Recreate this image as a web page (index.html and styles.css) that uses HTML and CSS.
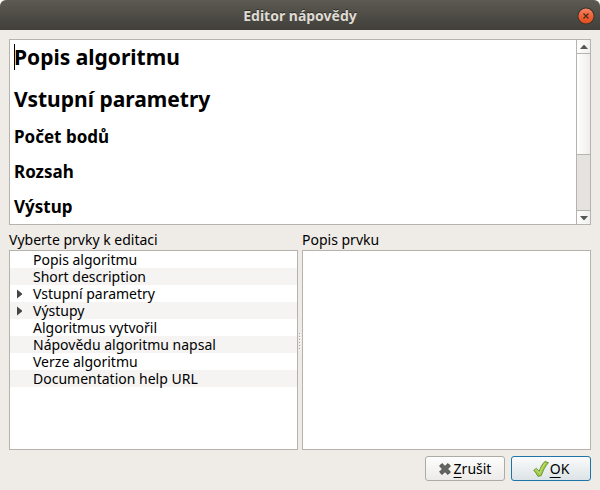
FILE: index.html
```html
<!DOCTYPE html>
<html lang="cs">
<head>
<meta charset="utf-8">
<meta name="viewport" content="width=device-width, initial-scale=1">
<title>Editor nápovědy</title>
<link rel="stylesheet" href="styles.css">
</head>
<body>
<div class="window">
  <header class="titlebar">
    <h1 class="title">Editor nápovědy</h1>
    <button class="close" type="button" aria-label="Zavřít">
      <svg width="18" height="18" viewBox="0 0 18 18" aria-hidden="true">
        <circle cx="9" cy="9" r="8.5" fill="#35322d"/>
        <circle cx="9" cy="9" r="7.6" fill="url(#closeFill)"/>
        <path d="M6.500 6.500l5 5M11.500 6.500l-5 5" stroke="#4b2a1a" stroke-width="1.200" fill="none"/>
        <defs><linearGradient id="closeFill" x1="0" y1="0" x2="0" y2="1"><stop offset="0" stop-color="#f58563"/><stop offset="0.5" stop-color="#ee6238"/><stop offset="1" stop-color="#e34e1c"/></linearGradient></defs>
      </svg>
    </button>
  </header>
  <main class="content">
    <section class="preview frame">
      <div class="document">
        <h2 class="heading"><span class="caret"></span>Popis algoritmu</h2>
        <h2 class="heading">Vstupní parametry</h2>
        <h3 class="subheading">Počet bodů</h3>
        <h3 class="subheading">Rozsah</h3>
        <h3 class="subheading">Výstup</h3>
      </div>
      <div class="scrollbar">
        <button class="step" type="button" aria-label="Nahoru"><svg width="8" height="4" viewBox="0 0 8 4" aria-hidden="true"><path d="M0 4L3.5 0h1L8 4z" fill="#555753"/></svg></button>
        <div class="track"><div class="thumb"></div></div>
        <button class="step" type="button" aria-label="Dolů"><svg width="8" height="4" viewBox="0 0 8 4" aria-hidden="true"><path d="M0 0h8L4.5 4h-1z" fill="#555753"/></svg></button>
      </div>
    </section>
    <div class="panes">
      <section class="pane">
        <h2 class="label" id="tree-label">Vyberte prvky k editaci</h2>
        <div class="frame tree">
          <ul class="items" aria-labelledby="tree-label">
            <li class="item">Popis algoritmu</li>
            <li class="item">Short description</li>
            <li class="item"><button class="expander" type="button" aria-label="Rozbalit Vstupní parametry"><svg width="5" height="10" viewBox="0 0 5 10" aria-hidden="true"><path d="M0 0.5L5 4.5v1L0 9.5z" fill="#454545"/></svg></button>Vstupní parametry</li>
            <li class="item"><button class="expander" type="button" aria-label="Rozbalit Výstupy"><svg width="5" height="10" viewBox="0 0 5 10" aria-hidden="true"><path d="M0 0.5L5 4.5v1L0 9.5z" fill="#454545"/></svg></button>Výstupy</li>
            <li class="item">Algoritmus vytvořil</li>
            <li class="item">Nápovědu algoritmu napsal</li>
            <li class="item">Verze algoritmu</li>
            <li class="item">Documentation help URL</li>
          </ul>
        </div>
      </section>
      <div class="splitter">
        <svg width="2" height="17" viewBox="0 0 2 17" aria-hidden="true"><path d="M0 0h1v1H0zM0 3h1v1H0zM0 6h1v1H0zM0 9h1v1H0zM0 12h1v1H0zM0 15h1v1H0z" fill="#aaa6a1"/><path d="M1 1h1v1H1zM1 4h1v1H1zM1 7h1v1H1zM1 10h1v1H1zM1 13h1v1H1zM1 16h1v1H1z" fill="#fff"/></svg>
      </div>
      <section class="pane">
        <label class="label" for="description">Popis prvku</label>
        <textarea class="description frame" id="description"></textarea>
      </section>
    </div>
    <footer class="actions">
      <button class="button" type="button">
        <svg width="12" height="12" viewBox="0 0 12 12" aria-hidden="true"><path d="M3 0.6L6 3.4 9 0.6 11.4 3 8.5 6 11.4 9 9 11.4 6 8.6 3 11.4 0.6 9 3.5 6 0.6 3z" fill="#646662" stroke="#484a46" stroke-width="1" stroke-linejoin="round"/></svg>
        <span><u class="key">Z</u>rušit</span>
      </button>
      <button class="button primary" type="button">
        <svg width="16" height="16" viewBox="0 0 16 16" aria-hidden="true"><path d="M0.8 9.2L3.4 7.4 6.2 10.4C7.2 7 9.4 2.800 11.800 0.600L15.400 1.600C12.400 5.200 9.800 9.800 8.200 14.600L5 15.400C3.8 13 2.400 11 0.800 9.200z" fill="#a2cb45" stroke="#6b9631" stroke-width="1" stroke-linejoin="round"/><path d="M2.3 9.3l1-.6 3.300 3.600C8 8.400 10 4.500 12.400 1.900" fill="none" stroke="#c8e283" stroke-width="1"/></svg>
        <span><u class="key">O</u>K</span>
      </button>
    </footer>
  </main>
</div>
</body>
</html>
```
FILE: styles.css
```css
* {
  box-sizing: border-box;
}

body {
  margin: 0;
  background: #fff;
  color: #000;
  font: 14px/17px "Noto Sans", "Open Sans", sans-serif;
}

h1, h2, h3, ul {
  margin: 0;
  padding: 0;
}

button {
  padding: 0;
  border: 0;
  background: none;
  color: inherit;
  font: inherit;
}

svg {
  display: block;
  flex: none;
}

.window {
  display: flex;
  flex-direction: column;
  height: 100vh;
  min-height: 400px;
  overflow: hidden;
  border-radius: 6px 6px 0 0;
  background: #efebe7;
}

.titlebar {
  display: grid;
  grid-template-columns: 18px 1fr 18px;
  align-items: center;
  height: 30px;
  padding: 0 5px;
  border-top: 1px solid #5d5b53;
  background: linear-gradient(#5b5951, #403f3a);
}

.title {
  grid-column: 2;
  color: #dfdbd2;
  font-size: 14px;
  text-align: center;
  text-shadow: 0 -1px #2c2b28;
}

.content {
  display: flex;
  flex: 1;
  flex-direction: column;
  min-height: 0;
  padding: 9px;
}

.frame {
  border: 1px solid #b6b3af;
  background: #fff;
}

.preview {
  display: flex;
  flex: 184 1 0;
  min-height: 0;
}

.document {
  flex: 1;
  padding: 4px;
  overflow: hidden;
}

.heading {
  position: relative;
  margin-bottom: 16px;
  font-size: 21px;
  line-height: 26px;
}

.subheading {
  margin-bottom: 18px;
  font-size: 17px;
  line-height: 17px;
}

.caret {
  position: absolute;
  inset: 0 auto 0 0;
  width: 1px;
  background: #000;
}

.scrollbar {
  display: flex;
  flex-direction: column;
  width: 14px;
  border-left: 1px solid #b6b3af;
}

.step {
  display: grid;
  place-items: center;
  height: 13px;
  background: linear-gradient(90deg, #fff, #f0efed);
}

.track {
  flex: 1;
  border: solid #b6b3af;
  border-width: 1px 0;
  background: #e4e3e0;
}

.thumb {
  height: 65%;
  border-bottom: 1px solid #b6b3af;
  background: linear-gradient(90deg, #fff, #eeedeb);
}

.panes {
  display: flex;
  flex: 225 1 0;
  min-height: 0;
}

.pane {
  display: flex;
  flex: 1;
  flex-direction: column;
  min-width: 0;
}

.label {
  padding: 6px 0 2px;
  font-size: 14px;
  font-weight: 400;
}

.tree {
  flex: 1;
  overflow: hidden;
}

.items {
  background: repeating-linear-gradient(#fff 0 17px, #f5f4f3 17px 34px);
  list-style: none;
}

.item {
  position: relative;
  padding-left: 23px;
}

.expander {
  position: absolute;
  inset: 0 auto 0 0;
  display: grid;
  place-items: center;
  width: 19px;
}

.splitter {
  display: grid;
  place-items: center;
  width: 4px;
  padding-top: 8px;
}

.description {
  flex: 1;
  margin: 0;
  padding: 4px;
  outline: 0;
  font: inherit;
  resize: none;
}

.actions {
  display: flex;
  justify-content: flex-end;
  gap: 6px;
  padding-top: 6px;
}

.button {
  display: flex;
  align-items: center;
  justify-content: center;
  gap: 3px;
  width: 80px;
  height: 25px;
  border: 1px solid #aeaba7;
  border-radius: 3px;
  background: linear-gradient(#fdfdfd, #ecebe9);
}

.primary {
  gap: 1px;
  border-color: #1c74a8;
  background: linear-gradient(#fafbfb, #dce3e7);
}

.key {
  text-underline-offset: 3px;
}
```
